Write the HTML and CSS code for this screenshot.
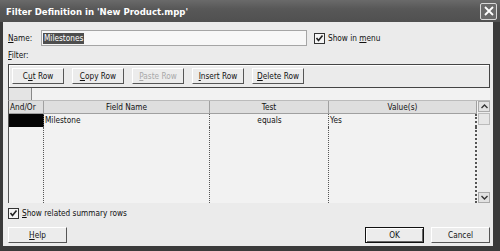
FILE: index.html
```html
<!DOCTYPE html>
<html>
<head>
<meta charset="utf-8">
<link rel="stylesheet" href="styles.css">
</head>
<body>
<div class="window">
  <div class="titlebar">
    <span class="title">Filter Definition in 'New Product.mpp'</span>
    <span class="close"><svg width="10" height="10" viewBox="0 0 10 10"><path d="M1 1 L9 9 M9 1 L1 9" stroke="#fff" stroke-width="1.8"/></svg></span>
  </div>
  <div class="client">
    <div class="name-row">
      <span class="label"><u>N</u>ame:</span>
      <div class="input"><span class="sel">Milestones</span></div>
      <span class="check"><span class="box"><svg width="9" height="9" viewBox="0 0 9 9"><path d="M1.5 4 L3.5 6.5 L7.5 1.5" stroke="#222" stroke-width="1.6" fill="none"/></svg></span><span>Show in <u>m</u>enu</span></span>
    </div>
    <div class="filter-label"><u>F</u>ilter:</div>
    <div class="toolbar">
      <span class="btn"><span>C<u>u</u>t Row</span></span>
      <span class="btn"><span><u>C</u>opy Row</span></span>
      <span class="btn disabled"><span><u>P</u>aste Row</span></span>
      <span class="btn"><span><u>I</u>nsert Row</span></span>
      <span class="btn"><span><u>D</u>elete Row</span></span>
    </div>
    <div class="editbar"><span class="corner"></span><span class="edit"></span></div>
    <div class="grid">
      <div class="table">
        <div class="row head">
          <span class="c c1">And/Or</span>
          <span class="c c2">Field Name</span>
          <span class="c c3">Test</span>
          <span class="c c4">Value(s)</span>
        </div>
        <div class="row data">
          <span class="c c1 black"></span>
          <span class="c c2">Milestone</span>
          <span class="c c3">equals</span>
          <span class="c c4">Yes</span>
        </div>
        <div class="row fill">
          <span class="c c1"></span>
          <span class="c c2"></span>
          <span class="c c3"></span>
          <span class="c c4"></span>
        </div>
      </div>
      <div class="scrollbar">
        <span class="sbtn"><svg width="7" height="5" viewBox="0 0 7 5"><path d="M0.5 4 L3.5 1 L6.5 4" stroke="#333" stroke-width="1.4" fill="none"/></svg></span>
        <span class="thumb"></span>
        <span class="track"></span>
        <span class="sbtn"><svg width="7" height="5" viewBox="0 0 7 5"><path d="M0.5 1 L3.5 4 L6.5 1" stroke="#333" stroke-width="1.4" fill="none"/></svg></span>
      </div>
    </div>
    <div class="summary"><span class="box"><svg width="9" height="9" viewBox="0 0 9 9"><path d="M1.5 4 L3.5 6.5 L7.5 1.5" stroke="#222" stroke-width="1.6" fill="none"/></svg></span><span><u>S</u>how related summary rows</span></div>
    <div class="buttons">
      <span class="btn wide"><span><u>H</u>elp</span></span>
      <span class="spacer"></span>
      <span class="btn wide default">OK</span>
      <span class="btn wide">Cancel</span>
    </div>
  </div>
</div>
</body>
</html>
```
FILE: styles.css
```css
html, body {
  margin: 0;
  padding: 0;
}
body {
  width: 500px;
  height: 251px;
  overflow: hidden;
  font-family: "DejaVu Sans Condensed", "DejaVu Sans", sans-serif;
  font-stretch: condensed;
  font-size: 8.2px;
  color: #111;
}
.window {
  width: 500px;
  height: 251px;
  background: #3a3a3a;
  display: flex;
  flex-direction: column;
}
.titlebar {
  height: 22px;
  flex: none;
  background: linear-gradient(#6a6a6a, #585858 40%, #505050);
  display: flex;
  align-items: center;
  padding: 0 3px 0 6px;
  box-sizing: border-box;
}
.title {
  color: #fff;
  font-weight: bold;
  font-size: 9.5px;
  flex: 1;
}
.close {
  width: 15px;
  height: 15px;
  border: 1px solid #d8d8d8;
  border-radius: 2px;
  background: #6a6a6a;
  display: flex;
  align-items: center;
  justify-content: center;
}
.client {
  margin: 0 7px 5px 3px;
  flex: 1;
  background: #ebebeb;
  padding: 8px 3px 0 5px;
  box-sizing: border-box;
  display: flex;
  flex-direction: column;
}
.name-row {
  height: 16px;
  display: flex;
  align-items: center;
}
.label {
  width: 33px;
}
.input {
  width: 263px;
  height: 14px;
  border: 1px solid #a5a5a5;
  background: #f7f7f7;
  display: flex;
  align-items: center;
  padding-left: 1px;
}
.sel {
  background: #4e4e4e;
  color: #fff;
  padding: 0 1px;
  line-height: 11px;
}
.check {
  margin-left: 7px;
  display: flex;
  align-items: center;
}
.box {
  width: 9px;
  height: 9px;
  border: 1px solid #333;
  background: #f4f4f4;
  display: inline-flex;
  margin-right: 3px;
}
.filter-label {
  height: 12px;
  line-height: 12px;
  margin-top: 3px;
  margin-bottom: 3px;
}
.toolbar {
  height: 24px;
  border: 1px solid #444;
  box-shadow: inset 1px 1px 0 #fff;
  display: flex;
  align-items: center;
  gap: 8px;
  padding-left: 3px;
  box-sizing: border-box;
}
.btn {
  width: 52px;
  height: 16px;
  box-sizing: border-box;
  background: #ececec;
  border: 1px solid;
  border-color: #fff #555 #555 #fff;
  display: flex;
  align-items: center;
  justify-content: center;
}
.btn.disabled {
  color: #a8a8a8;
}
.editbar {
  height: 13px;
  display: flex;
  border-left: 1px solid #555;
  border-bottom: 1px solid #bbb;
  box-sizing: border-box;
}
.corner {
  width: 22px;
  border-right: 1px solid #888;
  background: #e4e4e4;
}
.edit {
  flex: 1;
  background: #f2f2f2;
}
.grid {
  height: 102px;
  display: flex;
  border-left: 1px solid #555;
  background: #f2f2f2;
}
.table {
  width: 468px;
  display: flex;
  flex-direction: column;
}
.row {
  display: flex;
  height: 13px;
}
.row.fill {
  flex: 1;
  height: auto;
}
.c {
  box-sizing: border-box;
  border-right: 1px dotted #555;
  line-height: 13px;
  overflow: hidden;
}
.c1 { width: 35px; }
.c2 { width: 166px; }
.c3 { width: 119px; }
.c4 { width: 148px; border-right: 2px dotted #555; }
.head .c {
  background: #dedede;
  border-right: 1px solid #a0a0a0;
  border-bottom: 1px solid #a0a0a0;
  text-align: center;
}
.head .c1 { text-align: left; padding-left: 1px; }
.data .c { padding-left: 1px; }
.data .c3 { text-align: center; }
.black { background: #050505; }
.scrollbar {
  width: 13px;
  margin-left: 1px;
  display: flex;
  flex-direction: column;
  background: #ececec;
}
.sbtn {
  height: 11px;
  border: 1px solid #aaa;
  background: #e2e2e2;
  display: flex;
  align-items: center;
  justify-content: center;
  box-sizing: border-box;
}
.thumb {
  height: 12px;
  margin-top: 1px;
  border: 1px solid #bbb;
  background: #e6e6e6;
  box-sizing: border-box;
}
.track { flex: 1; }
.summary {
  height: 12px;
  margin-top: 4px;
  display: flex;
  align-items: center;
}
.buttons {
  margin-top: 8px;
  display: flex;
  align-items: center;
}
.btn.wide { width: 59px; }
.spacer { flex: 1; }
.btn.default {
  border: 1px solid #111;
  box-shadow: inset 1px 1px 0 #fff, inset -1px -1px 0 #666;
  margin-right: 7px;
}
```
